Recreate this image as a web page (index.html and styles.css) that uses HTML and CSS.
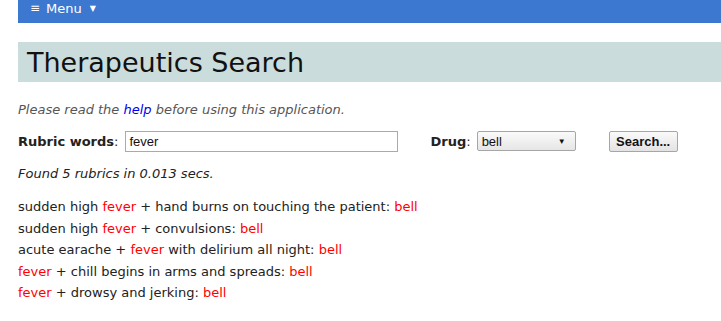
FILE: index.html
```html
<!DOCTYPE html>
<html lang="en">
<head>
    <meta charset="UTF-8">
    <meta name="viewport" content="width=device-width, initial-scale=1.0">
    <title>Therapeutics Search</title>
    <link rel="stylesheet" href="styles.css">
</head>
<body>
    <div class="menubar">
        <span class="menu-icon">&#8801;</span><span class="menu-label">Menu</span><span class="menu-arrow">&#9660;</span>
    </div>

    <h1 class="page-title">Therapeutics Search</h1>

    <p class="intro">Please read the <a href="#">help</a> before using this application.</p>

    <form class="search-form">
        <div class="field">
            <span class="label"><b>Rubric words</b>:</span>
            <input type="text" class="words" value="fever">
        </div>
        <div class="field drug">
            <span class="label"><b>Drug</b>:</span>
            <div class="select"><span>bell</span><span class="arrow">&#9660;</span></div>
        </div>
        <button type="button" class="search-btn">Search...</button>
    </form>

    <p class="found">Found 5 rubrics in 0.013 secs.</p>

    <div class="results">
        <div class="rubric">sudden high <span class="hit">fever</span> + hand burns on touching the patient: <span class="hit">bell</span></div>
        <div class="rubric">sudden high <span class="hit">fever</span> + convulsions: <span class="hit">bell</span></div>
        <div class="rubric">acute earache + <span class="hit">fever</span> with delirium all night: <span class="hit">bell</span></div>
        <div class="rubric"><span class="hit">fever</span> + chill begins in arms and spreads: <span class="hit">bell</span></div>
        <div class="rubric"><span class="hit">fever</span> + drowsy and jerking: <span class="hit">bell</span></div>
    </div>
</body>
</html>
```

FILE: styles.css
```css
body {
    margin: 0;
    padding: 0 0 0 18px;
    font-family: "DejaVu Sans", Verdana, sans-serif;
    font-size: 13px;
    color: #222;
    background: white;
}

.menubar {
    display: flex;
    align-items: center;
    background-color: #3c78d0;
    height: 23px;
    padding: 0 0 7px 12px;
    box-sizing: border-box;
    color: white;
    font-size: 13px;
}

.menu-icon {
    font-size: 12px;
    margin-right: 6px;
}

.menu-arrow {
    font-size: 8px;
    margin-left: 8px;
}

.page-title {
    margin: 19px 0 0 0;
    height: 40px;
    padding-left: 9px;
    background-color: #cadddc;
    font-weight: normal;
    font-size: 27px;
    line-height: 41px;
    color: #111;
}

.intro {
    margin: 19px 0 0 0;
    font-style: italic;
    color: #555;
    line-height: 18px;
}

.intro a {
    color: #0000ee;
    text-decoration: none;
}

.search-form {
    display: flex;
    align-items: center;
    margin-top: 11px;
    height: 22px;
}

.field {
    display: flex;
    align-items: center;
}

.label {
    margin-right: 7px;
}

.words {
    width: 273px;
    height: 21px;
    box-sizing: border-box;
    border: 1px solid #aaa;
    padding: 0 3px;
    font-family: "Liberation Sans", Arial, sans-serif;
    font-size: 13px;
    color: #111;
}

.drug {
    margin-left: 32px;
}

.drug .label {
    margin-right: 6px;
}

.select {
    display: flex;
    align-items: center;
    justify-content: space-between;
    box-sizing: border-box;
    width: 99px;
    height: 20px;
    padding: 0 9px 0 4px;
    border: 1px solid #a6a6a6;
    border-radius: 2px;
    background: linear-gradient(#fafafa, #e6e6e6);
    font-family: "Liberation Sans", Arial, sans-serif;
    font-size: 13px;
    color: #111;
}

.arrow {
    font-size: 8px;
}

.search-btn {
    margin-left: 33px;
    width: 69px;
    height: 21px;
    padding: 0;
    border: 1px solid #a6a6a6;
    border-radius: 2px;
    background: linear-gradient(#fafafa, #e3e3e3);
    font-family: "Liberation Sans", Arial, sans-serif;
    font-weight: bold;
    font-size: 13px;
    color: #111;
}

.found {
    margin: 13px 0 0 0;
    font-style: italic;
    line-height: 18px;
}

.results {
    margin-top: 13px;
}

.rubric {
    line-height: 21.5px;
}

.hit {
    color: #ff0000;
}
```
